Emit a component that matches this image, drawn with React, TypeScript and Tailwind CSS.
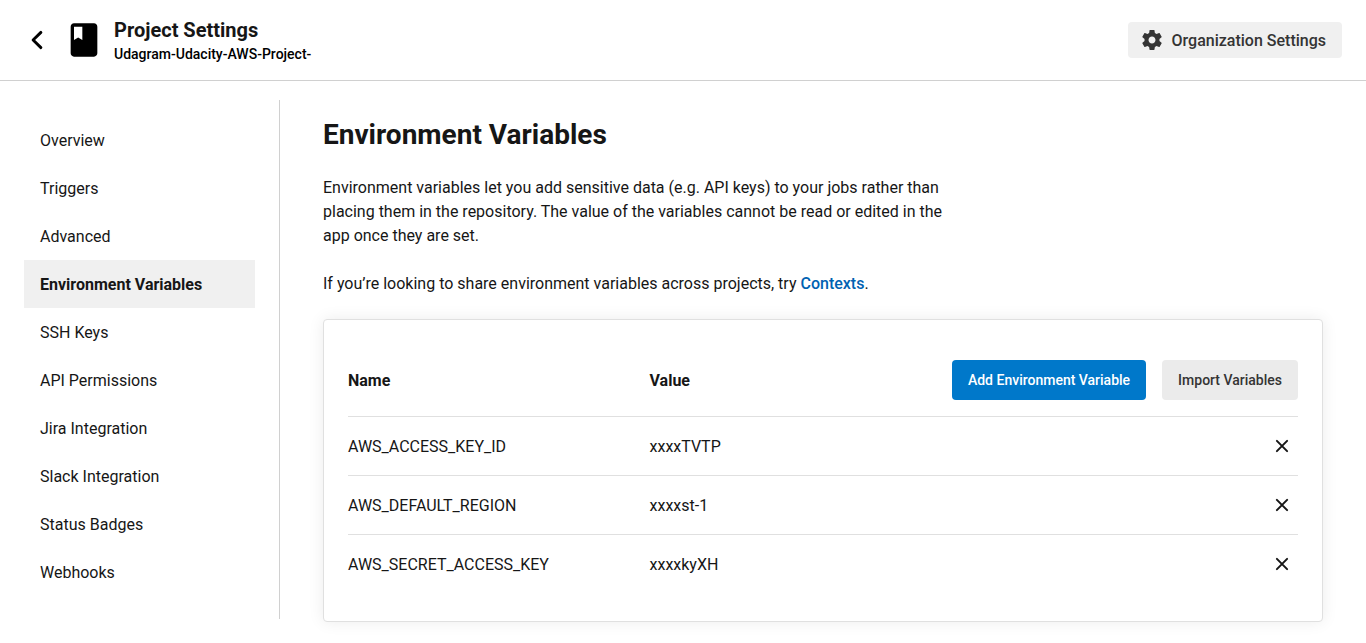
const navItems = [
  'Overview',
  'Triggers',
  'Advanced',
  'Environment Variables',
  'SSH Keys',
  'API Permissions',
  'Jira Integration',
  'Slack Integration',
  'Status Badges',
  'Webhooks',
];

const variables = [
  { name: 'AWS_ACCESS_KEY_ID', value: 'xxxxTVTP' },
  { name: 'AWS_DEFAULT_REGION', value: 'xxxxst-1' },
  { name: 'AWS_SECRET_ACCESS_KEY', value: 'xxxxkyXH' },
];

function Icon({ d, className }: { d: string; className: string }) {
  return (
    <svg viewBox="0 0 24 24" fill="currentColor" className={className} aria-hidden="true">
      <path d={d} />
    </svg>
  );
}

const BOOK =
  'M18 2H6c-1.1 0-2 .9-2 2v16c0 1.1.9 2 2 2h12c1.1 0 2-.9 2-2V4c0-1.1-.9-2-2-2zM6 4h5v8l-2.500-1.500L6 12V4z';
const GEAR =
  'M19.43 12.98c.04-.32.07-.64.07-.98s-.03-.66-.07-.98l2.110-1.650c.19-.15.24-.42.12-.64l-2-3.460c-.12-.22-.39-.3-.61-.22l-2.490 1c-.52-.4-1.080-.73-1.690-.98l-.38-2.650C14.460 2.180 14.250 2 14 2h-4c-.25 0-.46.18-.49.42l-.38 2.650c-.61.25-1.170.59-1.690.98l-2.490-1c-.23-.09-.49 0-.61.22l-2 3.460c-.13.22-.07.49.12.64l2.110 1.650c-.04.32-.07.65-.07.98s.03.66.07.98l-2.110 1.650c-.19.15-.24.42-.12.64l2 3.460c.12.22.39.3.61.22l2.490-1c.52.4 1.080.73 1.690.98l.38 2.650c.03.24.24.42.49.42h4c.25 0 .46-.18.49-.42l.38-2.650c.61-.25 1.170-.59 1.690-.98l2.490 1c.23.09.49 0 .61-.22l2-3.460c.12-.22.07-.49-.12-.64l-2.110-1.650zM12 15.500c-1.930 0-3.500-1.570-3.500-3.500s1.570-3.500 3.500-3.500 3.500 1.570 3.500 3.500-1.570 3.500-3.500 3.500z';

function BackIcon() {
  return (
    <svg
      viewBox="0 0 36 36"
      fill="none"
      stroke="currentColor"
      strokeWidth="2.9"
      strokeLinecap="round"
      strokeLinejoin="round"
      className="size-9"
      aria-hidden="true"
    >
      <path d="M21.900 10.400 L14.100 18 L21.900 25.600" />
    </svg>
  );
}

function CloseIcon() {
  return (
    <svg
      viewBox="0 0 20 20"
      fill="none"
      stroke="currentColor"
      strokeWidth="2"
      strokeLinecap="round"
      className="size-5"
      aria-hidden="true"
    >
      <path d="M4.900 4.900 L15.100 15.100 M15.100 4.900 L4.900 15.100" />
    </svg>
  );
}

function Header() {
  return (
    <header className="flex h-[81px] items-center border-b border-[#d0d0d0] pr-6 pl-[19px]">
      <button aria-label="Back" className="text-black">
        <BackIcon />
      </button>
      <Icon d={BOOK} className="ml-[9px] size-10 text-black" />
      <div className="ml-2.5 flex flex-col">
        <h1 className="text-[20px] leading-7 font-bold text-[#161616]">Project Settings</h1>
        <p className="text-sm leading-5 font-medium text-black">Udagram-Udacity-AWS-Project-</p>
      </div>
      <button className="ml-auto flex h-9 items-center gap-2 rounded bg-[#f0f0f0] pr-4 pl-3 font-medium text-[#343434]">
        <Icon d={GEAR} className="size-6" />
        <span className="pt-0.5">Organization Settings</span>
      </button>
    </header>
  );
}

function Sidebar() {
  return (
    <nav className="mt-[19px] h-[519px] w-[280px] shrink-0 border-r border-[#d0d0d0] pt-4 pr-6 pl-6">
      {navItems.map((item) => (
        <a
          key={item}
          className={
            item === 'Environment Variables'
              ? 'flex h-12 items-center bg-[#f0f0f0] px-4 pt-0.5 font-bold'
              : 'flex h-12 items-center px-4 pt-0.5'
          }
        >
          {item}
        </a>
      ))}
    </nav>
  );
}

function VariablesCard() {
  return (
    <section className="mt-[23px] h-[303px] rounded border border-[#e0e0e0] bg-white px-6 pt-10 shadow-[0_0_16px_rgba(0,0,0,0.08)]">
      <div className="flex h-[57px] items-start border-b border-[#e0e0e0]">
        <div className="flex h-10 w-[301.5px] items-center pt-0.5 font-bold">Name</div>
        <div className="flex h-10 items-center pt-0.5 font-bold">Value</div>
        <div className="ml-auto flex gap-4 text-sm font-medium">
          <button className="h-10 rounded bg-[#0078ca] px-4 font-medium text-white">
            Add Environment Variable
          </button>
          <button className="h-10 rounded bg-[#ebebeb] px-4 font-medium text-[#343434]">
            Import Variables
          </button>
        </div>
      </div>
      {variables.map(({ name, value }) => (
        <div
          key={name}
          className="flex h-[59px] items-center border-b border-[#e0e0e0] last:border-transparent"
        >
          <span className="w-[301.5px] pt-0.5">{name}</span>
          <span className="pt-0.5">{value}</span>
          <button aria-label="Delete variable" className="mr-1.5 ml-auto text-[#161616]">
            <CloseIcon />
          </button>
        </div>
      ))}
    </section>
  );
}

export default function App() {
  return (
    <div className="h-[643px] overflow-hidden bg-white font-[Roboto,sans-serif] text-base text-[#161616]">
      <Header />
      <div className="flex">
        <Sidebar />
        <main className="ml-[43px] w-[1000px] pt-[33px]">
          <h2 className="text-[28px] leading-[42px] font-bold">Environment Variables</h2>
          <p className="mt-5 w-[640px]">
            Environment variables let you add sensitive data (e.g. API keys) to your jobs rather
            than placing them in the repository. The value of the variables cannot be read or
            edited in the app once they are set.
          </p>
          <p className="mt-6">
            If you’re looking to share environment variables across projects, try{' '}
            <a className="font-medium text-[#0062b2]">Contexts</a>.
          </p>
          <VariablesCard />
        </main>
      </div>
    </div>
  );
}
